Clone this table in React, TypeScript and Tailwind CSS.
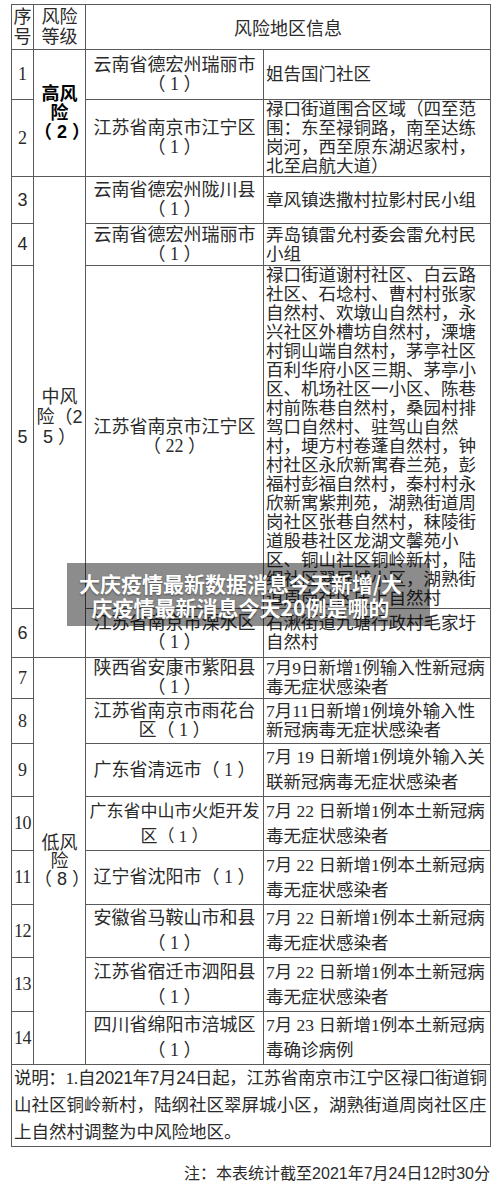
import React from "react"

const SERIF = "font-['Liberation_Serif','Noto_Sans_CJK_SC',serif]"
const SANS = "font-['Liberation_Sans','Noto_Sans_CJK_SC',sans-serif]"

type Row = {
  n: string
  sansN?: boolean
  h: number
  c3: string[]
  c4: string[]
  wide?: boolean
  small3?: boolean
}

const rows: Row[] = [
  { n: "1", h: 50, c3: ["云南省德宏州瑞丽市", "（ 1 ）"], c4: ["姐告国门社区"] },
  {
    n: "2",
    h: 77,
    c3: ["江苏省南京市江宁区", "（ 1 ）"],
    c4: ["禄口街道围合区域（四至范", "围：东至禄铜路，南至达练", "岗河，西至原东湖迟家村，", "北至启航大道）"],
  },
  { n: "3", sansN: true, h: 47, c3: ["云南省德宏州陇川县", "（ 1 ）"], c4: ["章风镇迭撒村拉影村民小组"] },
  { n: "4", sansN: true, h: 42, c3: ["云南省德宏州瑞丽市", "（ 1 ）"], c4: ["弄岛镇雷允村委会雷允村民", "小组"] },
  {
    n: "5",
    sansN: true,
    h: 341,
    c3: ["江苏省南京市江宁区", "（ 22 ）"],
    c4: [
      "禄口街道谢村社区、白云路",
      "社区、石埝村、曹村村张家",
      "自然村、欢墩山自然村，永",
      "兴社区外槽坊自然村，溧塘",
      "村铜山端自然村，茅亭社区",
      "百利华府小区三期、茅亭小",
      "区、机场社区一小区、陈巷",
      "村前陈巷自然村，桑园村排",
      "驾口自然村、驻驾山自然",
      "村，埂方村卷蓬自然村，钟",
      "村社区永欣新寓春兰苑，彭",
      "福村彭福自然村，秦村村永",
      "欣新寓紫荆苑，湖熟街道周",
      "岗社区张巷自然村，秣陵街",
      "道殷巷社区龙湖文馨苑小",
      "区、铜山社区铜岭新村，陆",
      "纲社区翠屏城小区，湖熟街",
      "道周岗社区庄上自然村",
    ],
  },
  { n: "6", sansN: true, h: 49, c3: ["江苏省南京市溧水区", "（ 1 ）"], c4: ["石湫街道九塘行政村毛家圩", "自然村"] },
  { n: "7", h: 41, c3: ["陕西省安康市紫阳县", "（ 1 ）"], c4: ["7月9日新增1例输入性新冠病", "毒无症状感染者"] },
  { n: "8", h: 45, c3: ["江苏省南京市雨花台", "区（ 1 ）"], c4: ["7月11日新增1例境外输入性", "新冠病毒无症状感染者"] },
  { n: "9", h: 53, wide: true, c3: ["广东省清远市（ 1 ）"], c4: ["7月 19 日新增1例境外输入关", "联新冠病毒无症状感染者"] },
  {
    n: "10",
    h: 54,
    wide: true,
    small3: true,
    c3: ["广东省中山市火炬开发", "区（ 1 ）"],
    c4: ["7月 22 日新增1例本土新冠病", "毒无症状感染者"],
  },
  { n: "11", h: 54, wide: true, c3: ["辽宁省沈阳市（ 1 ）"], c4: ["7月 22 日新增1例本土新冠病", "毒无症状感染者"] },
  { n: "12", h: 53, wide: true, c3: ["安徽省马鞍山市和县", "（ 1 ）"], c4: ["7月 22 日新增1例本土新冠病", "毒无症状感染者"] },
  { n: "13", h: 54, wide: true, c3: ["江苏省宿迁市泗阳县", "（ 1 ）"], c4: ["7月 22 日新增1例本土新冠病", "毒无症状感染者"] },
  { n: "14", h: 53, wide: true, c3: ["四川省绵阳市涪城区", "（ 1 ）"], c4: ["7月 23 日新增1例本土新冠病", "毒确诊病例"] },
]

// merged 风险等级 cells, keyed by the row they start on
const levels: Record<string, { span: number; lines: string[]; bold?: boolean; lead: string }> = {
  "1": { span: 2, lines: ["高风", "险", "（ 2 ）"], bold: true, lead: "leading-[19px]" },
  "3": { span: 4, lines: ["中风", "险（2", "5 ）"], lead: "leading-[20px]" },
  "7": { span: 8, lines: ["低风", "险", "（ 8 ）"], lead: "leading-[18px]" },
}

function Lines({ lines }: { lines: string[] }) {
  return (
    <>
      {lines.map((l, i) => (
        <div key={i}>{l}</div>
      ))}
    </>
  )
}

const cell = "border border-[#5a5a5a] p-0 align-middle"

export default function App() {
  return (
    <div className="relative h-[1190px] w-[500px] overflow-hidden bg-white text-[#2a2a2a]">
      <div className="pl-[11px] pt-[4px]">
        <table className={`w-[479px] table-fixed border-collapse ${SERIF}`}>
          <colgroup>
            <col className="w-[22px]" />
            <col className="w-[52px]" />
            <col className="w-[178px]" />
            <col className="w-[227px]" />
          </colgroup>
          <tbody>
            <tr className="h-[45px]">
              <td className={`${cell} text-center text-[18px] leading-[20px]`}>
                <Lines lines={["序", "号"]} />
              </td>
              <td className={`${cell} text-center text-[18px] leading-[20px]`}>
                <Lines lines={["风险", "等级"]} />
              </td>
              <td colSpan={2} className={`${cell} pt-[4px] text-center text-[18px] leading-[20px]`}>
                风险地区信息
              </td>
            </tr>
            {rows.map((r) => {
              const lv = levels[r.n]
              const lead = r.wide ? "leading-[25px]" : "leading-[19px]"
              return (
                <tr key={r.n} style={{ height: r.h }}>
                  <td
                    className={`${cell} text-center text-[18px] ${r.sansN ? SANS : SERIF} ${
                      r.n.length > 1 ? "tracking-[-0.5px]" : ""
                    }`}
                  >
                    {r.n}
                  </td>
                  {lv && (
                    <td
                      rowSpan={lv.span}
                      className={`${cell} whitespace-nowrap text-center text-[18px] ${lv.lead} ${SANS} ${
                        lv.bold ? "font-bold text-black" : ""
                      }`}
                    >
                      <Lines lines={lv.lines} />
                    </td>
                  )}
                  <td
                    className={`${cell} whitespace-nowrap text-center ${
                      r.small3 ? "text-[17px]" : "text-[18px]"
                    } ${lead}`}
                  >
                    <Lines lines={r.c3} />
                  </td>
                  <td className={`${cell} whitespace-nowrap pl-[2px] text-left text-[17.5px] ${lead}`}>
                    <Lines lines={r.c4} />
                  </td>
                </tr>
              )
            })}
            <tr className="h-[81px]">
              <td colSpan={4} className={`${cell} whitespace-nowrap pl-[2px] text-[17.5px] leading-[27px] ${SANS}`}>
                <div className="tracking-[-0.35px]">
                  说明：<span className={SERIF}>1.</span>自2021年7月24日起，江苏省南京市江宁区禄口街道铜
                </div>
                <div>山社区铜岭新村，陆纲社区翠屏城小区，湖熟街道周岗社区庄</div>
                <div>上自然村调整为中风险地区。</div>
              </td>
            </tr>
          </tbody>
        </table>
      </div>

      <div className={`mt-[17px] pr-[10px] text-right text-[16px] leading-[20px] ${SANS}`}>
        注：本表统计截至2021年7月24日12时30分
      </div>

      {/* watermark caption over the table */}
      <div className="absolute left-[67px] top-[563px] h-[63px] w-[363px] bg-black/45 pl-[11px] pr-[27px] pt-[8px] text-center font-['Noto_Sans_CJK_SC',sans-serif] text-[21px] font-bold leading-[24px] text-white [text-shadow:0_1px_2px_rgba(0,0,0,0.45)]">
        <div className="whitespace-nowrap">大庆疫情最新数据消息今天新增/大</div>
        <div className="whitespace-nowrap">庆疫情最新消息今天20例是哪的</div>
      </div>
    </div>
  )
}
